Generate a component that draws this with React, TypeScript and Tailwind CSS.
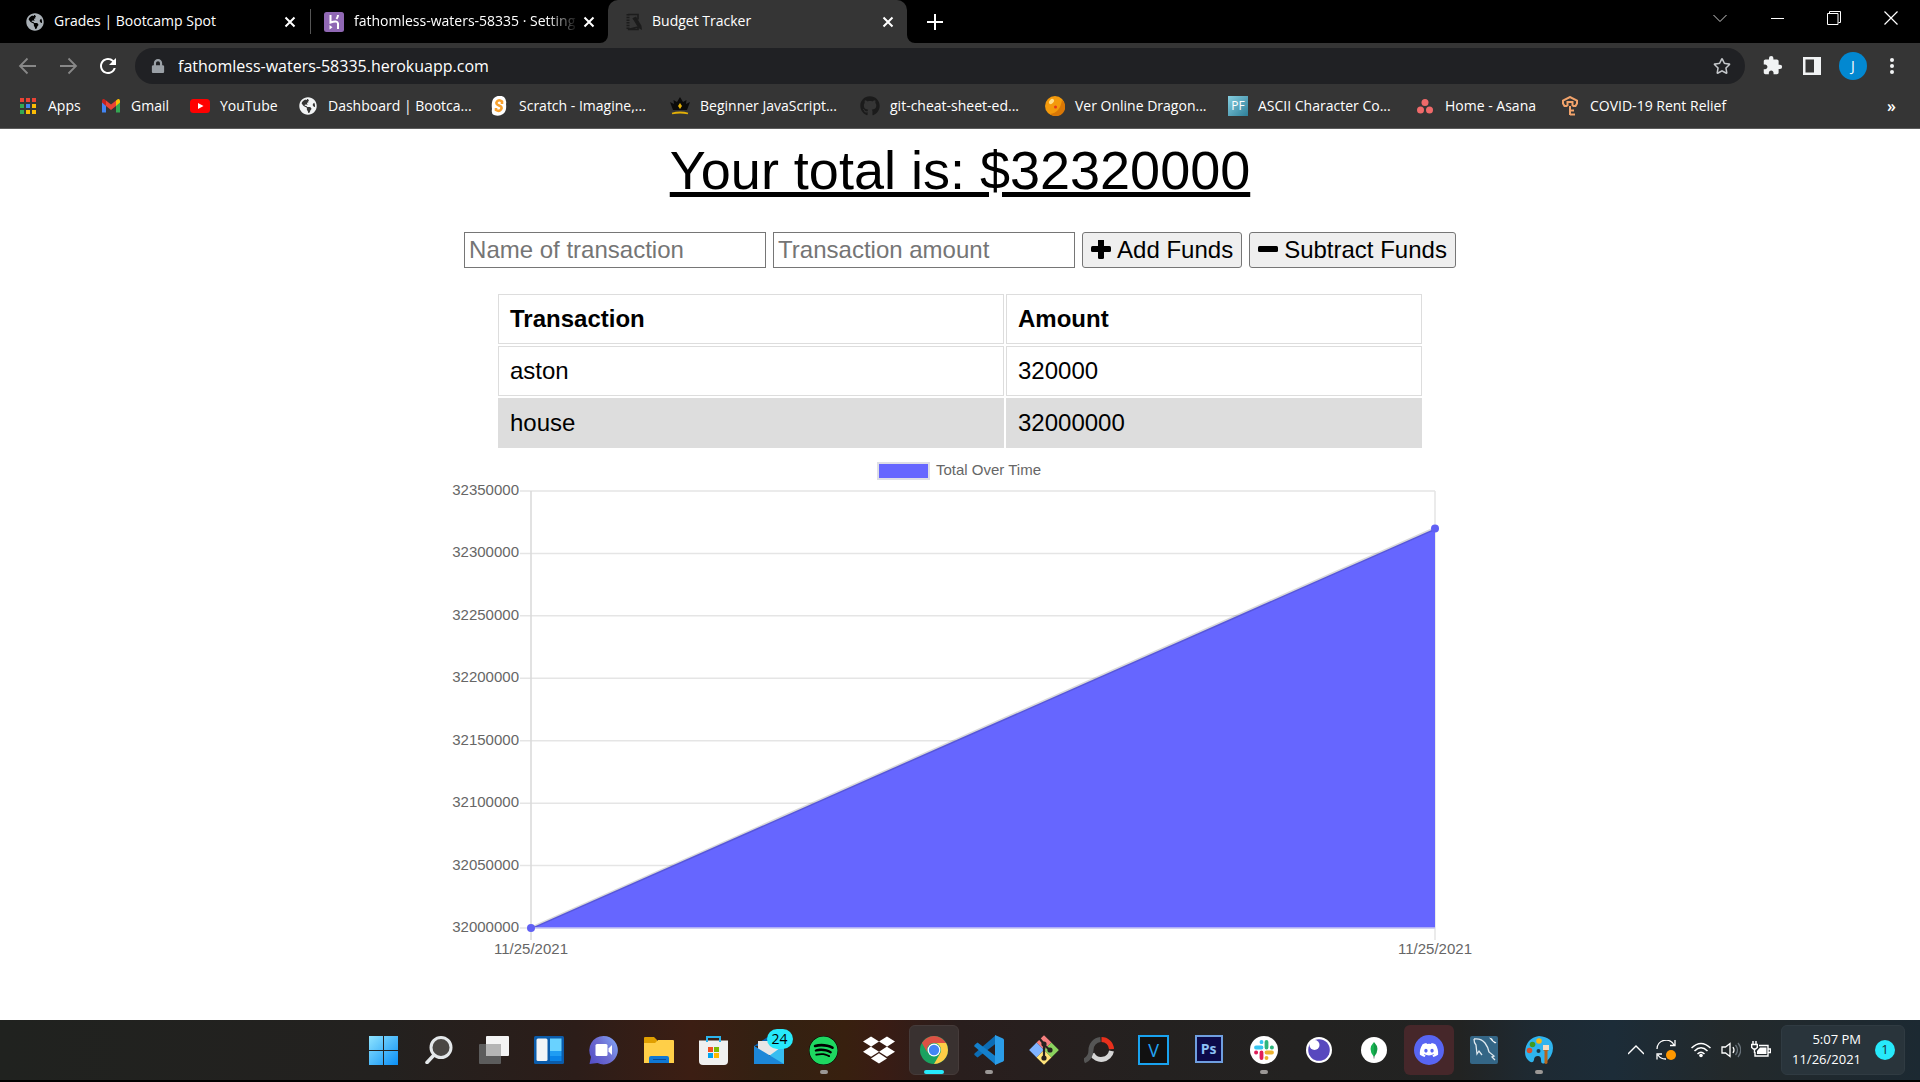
import React from "react";
import {
  FaDiscord,
  FaDropbox,
  FaGithub,
  FaGlobeAmericas,
  FaLock,
  FaRegStar,
  FaSpotify,
} from "react-icons/fa";
import { MdExtension, MdRefresh } from "react-icons/md";

const UI = "font-['Open_Sans','Noto_Sans',sans-serif]";
const tabLabel = "grow whitespace-nowrap pb-0.5";

function CloseGlyph() {
  return (
    <svg viewBox="0 0 12 12" className="size-3" stroke="#fff" strokeWidth="2" aria-hidden="true">
      <path d="M1.5 1.5l9 9M10.5 1.5l-9 9" />
    </svg>
  );
}

function TabStrip() {
  return (
    <div className="flex h-[43px] bg-black text-sm text-white">
      <div className="flex w-[310px] items-center pl-[26px] pr-[14px]">
        <FaGlobeAmericas className="size-[18px] shrink-0 text-[#a9b0b6]" />
        <span className={`${tabLabel} ml-[10px]`}>Grades | Bootcamp Spot</span>
        <button aria-label="Close Grades" className="shrink-0"><CloseGlyph /></button>
      </div>
      <div className="my-[9px] w-px bg-[#555]" />
      <div className="flex w-[297px] items-center pl-[13px] pr-[13px]">
        <svg viewBox="0 0 20 20" className="size-5 shrink-0">
          <rect width="20" height="20" rx="2.500" fill="#9068b4" />
          <path d="M6.500 3v7.500q7-2.500 7.500 1V17M14 3q0 2-1.500 4" fill="none" stroke="#fff" strokeWidth="2" />
          <path d="M5.500 13l3 2.200-3 2.200z" fill="#fff" />
        </svg>
        <span className={`${tabLabel} ml-[10px] min-w-0 [mask-image:linear-gradient(to_right,#000_84%,transparent_98%)]`}>
          fathomless-waters-58335 · Setting
        </span>
        <button aria-label="Close fathomless-waters" className="shrink-0"><CloseGlyph /></button>
      </div>
      <div className="relative flex w-[299px] items-center rounded-t-[10px] bg-[#353535] pl-[18px] pr-[13px]">
        <svg viewBox="0 0 8 8" className="absolute -left-2 bottom-0 size-2" fill="#353535"><path d="M8 0v8H0a8 8 0 0 0 8-8z" /></svg>
        <svg viewBox="0 0 8 8" className="absolute -right-2 bottom-0 size-2" fill="#353535"><path d="M0 0v8h8a8 8 0 0 1-8-8z" /></svg>
        <svg viewBox="0 0 18 18" className="size-[18px] shrink-0" fill="none" stroke="#1c1c1c" strokeWidth="1.6">
          <path d="M2 1.500h10v5M12 14v2.500H2z" />
          <path d="M2 1v16" strokeWidth="3" strokeDasharray="1.500 1.200" />
          <path d="M7.500 5.500l5.500 9 2 1-.3-2.500-5-8.500z" fill="#1c1c1c" />
        </svg>
        <span className={`${tabLabel} ml-2`}>Budget Tracker</span>
        <button aria-label="Close Budget Tracker"><CloseGlyph /></button>
      </div>
      <button aria-label="New tab" className="ml-5 self-center">
        <svg viewBox="0 0 16 16" className="size-4" stroke="#fff" strokeWidth="2"><path d="M8 0v16M0 8h16" /></svg>
      </button>
      <div className="ml-auto flex h-9 items-center gap-[43px] pr-[22px]">
        <button aria-label="Search tabs">
          <svg viewBox="0 0 14 14" className="size-[14px]" fill="none" stroke="#ccc"><path d="M.5 4l6.500 6.500L13.500 4" /></svg>
        </button>
        <button aria-label="Minimize">
          <svg viewBox="0 0 14 14" className="size-[14px]" stroke="#fff" shapeRendering="crispEdges"><path d="M.5 7.500h13" /></svg>
        </button>
        <button aria-label="Restore">
          <svg viewBox="0 0 14 14" className="size-[14px]" fill="none" stroke="#fff"><path d="M.5 2.500h10.500v11H.5zM2.500 2V.5h11v11H11.500" /></svg>
        </button>
        <button aria-label="Close window">
          <svg viewBox="0 0 14 14" className="size-[14px]" stroke="#fff" strokeWidth="1.200"><path d="M.5.5l13 13M13.500.5l-13 13" /></svg>
        </button>
      </div>
    </div>
  );
}

function AddressRow() {
  return (
    <div className="flex h-[45px] items-center bg-[#353535] pl-[18px] pr-[23px]">
      <button aria-label="Back">
        <svg viewBox="0 0 20 20" className="size-5" fill="none" stroke="#888" strokeWidth="1.800"><path d="M18 10H3M9.500 2.500L2 10l7.500 7.500" /></svg>
      </button>
      <button aria-label="Forward" className="ml-5">
        <svg viewBox="0 0 20 20" className="size-5" fill="none" stroke="#888" strokeWidth="1.800"><path d="M2 10h15M10.500 2.500L18 10l-7.500 7.500" /></svg>
      </button>
      <button aria-label="Reload" className="ml-[18px]">
        <MdRefresh className="size-6 text-white" />
      </button>
      <div className="ml-[15px] flex h-9 grow items-center rounded-full bg-[#202124] pl-4 pr-[14px]">
        <FaLock className="size-3.5 text-[#9aa0a6]" />
        <input
          aria-label="Address"
          defaultValue="fathomless-waters-58335.herokuapp.com"
          className="ml-[13px] min-w-0 grow bg-transparent text-base text-white outline-none"
        />
        <button aria-label="Bookmark this page"><FaRegStar className="size-[18px] text-[#c4c7ca]" /></button>
      </div>
      <button aria-label="Extensions" className="ml-[17px]"><MdExtension className="size-[21px] text-[#f1f3f4]" /></button>
      <button aria-label="Side panel" className="ml-5">
        <svg viewBox="0 0 18 18" className="size-[18px]"><path d="M0 0h18v18H0zM2.500 2.500v13h8.500v-13z" fill="#f1f3f4" fillRule="evenodd" /></svg>
      </button>
      <button aria-label="Profile" className="ml-[18px] flex size-7 items-center justify-center rounded-full bg-[#0288d1] text-sm text-white">J</button>
      <button aria-label="Menu" className="ml-5">
        <svg viewBox="0 0 10 18" className="h-[18px] w-[10px]" fill="#f1f3f4"><circle cx="5" cy="3" r="2" /><circle cx="5" cy="9" r="2" /><circle cx="5" cy="15" r="2" /></svg>
      </button>
    </div>
  );
}

const appColors = ["#ea4335", "#ea4335", "#ea4335", "#34a853", "#4285f4", "#fbbc05", "#34a853", "#fbbc05", "#fbbc05"];

const bookmarks: { name: string; cell: string; icon: React.ReactNode }[] = [
  {
    name: "Apps",
    cell: "w-[83px]",
    icon: (
      <svg viewBox="0 0 20 20" className="size-5">
        {appColors.map((c, i) => (
          <rect key={i} x={2 + (i % 3) * 6} y={2 + Math.floor(i / 3) * 6} width="4" height="4" fill={c} />
        ))}
      </svg>
    ),
  },
  {
    name: "Gmail",
    cell: "w-[89px]",
    icon: (
      <svg viewBox="0 0 20 20" className="size-5">
        <path d="M1 5v11.500h4V9z" fill="#4285f4" />
        <path d="M19 5v11.500h-4V9z" fill="#34a853" />
        <path d="M15 4.500L17 3q2-.5 2 2v1.500L15 10z" fill="#fbbc04" />
        <path d="M5 4.500L3 3Q1 2.500 1 5v1.500L5 10z" fill="#c5221f" />
        <path d="M5 4.500l5 4 5-4V10l-5 4-5-4z" fill="#ea4335" />
      </svg>
    ),
  },
  {
    name: "YouTube",
    cell: "w-[108px]",
    icon: (
      <svg viewBox="0 0 20 20" className="size-5"><rect y="3" width="20" height="14" rx="3.500" fill="#f00" /><path d="M8 7l5.500 3L8 13z" fill="#fff" /></svg>
    ),
  },
  { name: "Dashboard | Bootca...", cell: "w-[191px]", icon: <FaGlobeAmericas className="size-[18px] text-[#f1f3f4]" /> },
  {
    name: "Scratch - Imagine,...",
    cell: "w-[181px]",
    icon: (
      <svg viewBox="0 0 20 20" className="size-5">
        <path d="M5 2q5-4 10-1 3 3 2 7 1 7-3 10-4 3-9 1-3-1-2-6Q2 5 5 2z" fill="#fff" />
        <path d="M13 8V5.500Q10 3 8 5.500T10 9.500t2 4-5 .5v-2" fill="none" stroke="#f7a12f" strokeWidth="2.600" />
      </svg>
    ),
  },
  {
    name: "Beginner JavaScript...",
    cell: "w-[190px]",
    icon: (
      <svg viewBox="0 0 20 20" className="size-5">
        <path d="M3 14L0 6l4 2-.5-4L7 6l3-5 3 5 3.500-2L16 8l4-2-3 8z" fill="#0b0b0b" />
        <path d="M10 7l2 3-2 3-2-3z" fill="#e3b007" />
        <path d="M2 17.500q8-2 16 0" fill="none" stroke="#e3b007" strokeWidth="1.800" />
      </svg>
    ),
  },
  { name: "git-cheat-sheet-ed...", cell: "w-[185px]", icon: <FaGithub className="size-5 text-[#1b1b1b]" /> },
  {
    name: "Ver Online Dragon...",
    cell: "w-[183px]",
    icon: (
      <svg viewBox="0 0 20 20" className="size-5">
        <circle cx="10" cy="10" r="10" fill="#f49a0c" />
        <path d="M17 4a9 9 0 0 1-12 14q10-1 12-14z" fill="#d97706" />
        <ellipse cx="6.500" cy="5.500" rx="2" ry="3" transform="rotate(40 6.500 5.500)" fill="#ffe08a" />
        <circle cx="10.500" cy="11" r="1.500" fill="#e5391c" />
      </svg>
    ),
  },
  {
    name: "ASCII Character Co...",
    cell: "w-[187px]",
    icon: <span className="flex size-5 items-center justify-center bg-linear-to-br from-[#86cfe0] to-[#2c7f99] text-xs text-white">PF</span>,
  },
  {
    name: "Home - Asana",
    cell: "w-[145px]",
    icon: <svg viewBox="0 0 20 20" className="size-5" fill="#f06a6a"><circle cx="10" cy="6.500" r="3.500" /><circle cx="5.500" cy="14" r="3.500" /><circle cx="14.500" cy="14" r="3.500" /></svg>,
  },
  {
    name: "COVID-19 Rent Relief",
    cell: "w-[190px]",
    icon: (
      <svg viewBox="0 0 20 20" className="size-5" fill="none" stroke="#f2a36b" strokeWidth="2">
        <path d="M7.500 10H4.500L3 7.500V4.500L10 1l7 3.500v3L15.500 10h-3M7.500 10V6h5v4M10 10v9M10 14.500h4M10 18.500h5" />
      </svg>
    ),
  },
];

function BookmarksBar() {
  return (
    <nav className="flex h-[41px] items-center border-b border-[#5c5c5c] bg-[#353535] pb-1 pl-[18px] pr-6 text-sm text-white">
      {bookmarks.map((b) => (
        <a key={b.name} href="#" className={`${b.cell} flex shrink-0 items-center gap-[10px] whitespace-nowrap`}>
          <span className="flex size-5 shrink-0 items-center justify-center">{b.icon}</span>
          {b.name}
        </a>
      ))}
      <button aria-label="More bookmarks" className="ml-auto text-base font-semibold">»</button>
    </nav>
  );
}

const rows = [
  { name: "aston", amount: "320000" },
  { name: "house", amount: "32000000" },
];

function TransactionTable() {
  const cell = "border border-[#dddddd] px-[11px] py-[10px] text-left leading-7";
  return (
    <table className="mx-auto mt-6 w-[928px] table-fixed border-separate border-spacing-[2px]">
      <thead>
        <tr>
          <th className={`${cell} w-[506px]`}>Transaction</th>
          <th className={cell}>Amount</th>
        </tr>
      </thead>
      <tbody>
        {rows.map((r) => (
          <tr key={r.name} className="even:bg-[#dddddd]">
            <td className={cell}>{r.name}</td>
            <td className={cell}>{r.amount}</td>
          </tr>
        ))}
      </tbody>
    </table>
  );
}

const yTicks = [32350000, 32300000, 32250000, 32200000, 32150000, 32100000, 32050000, 32000000];

function TotalChart() {
  const left = 91;
  const right = 995;
  const top = 36;
  const bottom = 473;
  const step = (bottom - top) / 7;
  const peak = bottom - ((bottom - top) * 320000) / 350000;
  return (
    <svg viewBox="0 0 1040 520" className="mx-auto block w-[1040px] text-[15px]" fill="#666" role="img" aria-label="Total Over Time">
      <rect x="438" y="8" width="51" height="16" fill="#6666ff" stroke="#dedee6" strokeWidth="2" />
      <text x="496" y="20">Total Over Time</text>
      {yTicks.map((t, i) => (
        <g key={t}>
          <line x1={left - 11} x2={right} y1={top + i * step} y2={top + i * step} stroke="#e5e5e5" strokeWidth="1.500" />
          <text x={left - 12} y={top + i * step + 4} textAnchor="end">{t}</text>
        </g>
      ))}
      <line x1={left} x2={left} y1={top} y2={bottom + 12} stroke="#d9d9d9" strokeWidth="1.500" />
      <line x1={right} x2={right} y1={top} y2={bottom + 12} stroke="#e5e5e5" strokeWidth="1.500" />
      <path d={`M${left} ${bottom}L${right} ${peak}V${bottom}z`} fill="#6666ff" />
      <path d={`M${left} ${bottom}L${right} ${peak}`} stroke="#000" strokeOpacity="0.15" strokeWidth="3" />
      <path d={`M${left} ${bottom}H${right}`} stroke="#c8c8f4" strokeWidth="1.500" />
      <circle cx={left} cy={bottom} r="4" fill="#6060f4" />
      <circle cx={right} cy={peak} r="4" fill="#6060f4" />
      <text x={left} y={bottom + 26} textAnchor="middle">11/25/2021</text>
      <text x={right} y={bottom + 26} textAnchor="middle">11/25/2021</text>
    </svg>
  );
}

const field = "h-9 w-[302px] border border-[#767676] px-1 placeholder:text-[#757575]";
const action = "flex h-9 items-center gap-[6px] rounded-[3px] border border-[#767676] bg-[#efefef] px-2";

function BudgetPage() {
  return (
    <main className="flex grow flex-col bg-white font-['Liberation_Sans',Arial,sans-serif] text-2xl text-black">
      <h1 className="mt-[10px] text-center text-[54px] leading-[62px] underline decoration-[5px]">Your total is: $32320000</h1>
      <form className="mt-[31px] flex justify-center gap-[7px]" onSubmit={(e) => e.preventDefault()}>
        <input aria-label="Name of transaction" placeholder="Name of transaction" className={field} />
        <input aria-label="Transaction amount" placeholder="Transaction amount" className={field} />
        <button className={action}>
          <svg viewBox="0 0 20 20" className="size-5" aria-hidden="true">
            <rect y="6" width="20" height="6" rx="1.500" /><rect x="7" y="-1" width="6" height="20" rx="1.500" />
          </svg>
          Add Funds
        </button>
        <button className={action}>
          <svg viewBox="0 0 20 20" className="size-5" aria-hidden="true"><rect y="6" width="20" height="6" rx="1.500" /></svg>
          Subtract Funds
        </button>
      </form>
      <TransactionTable />
      <div className="mt-[5px]"><TotalChart /></div>
    </main>
  );
}

function ChromeLogo() {
  return (
    <svg viewBox="0 0 28 28" className="size-7">
      <circle cx="14" cy="14" r="14" fill="#1aa260" />
      <path d="M1.900 7A14 14 0 0 1 26.100 7H14a7 7 0 0 0-6.100 10.500z" fill="#dd5144" />
      <path d="M26.100 7A14 14 0 0 1 14 28l6.100-10.500A7 7 0 0 0 14 7z" fill="#ffcd46" />
      <circle cx="14" cy="14" r="6.500" fill="#fff" />
      <circle cx="14" cy="14" r="5.200" fill="#4285f4" />
    </svg>
  );
}

const apps: { name: string; icon: React.ReactNode; state?: "running" | "active" | "alert" }[] = [
  {
    name: "Start",
    icon: (
      <svg viewBox="0 0 29 29" className="size-[29px]">
        <defs><linearGradient id="win" x2="1" y2="1"><stop stopColor="#8fe4ff" /><stop offset="1" stopColor="#0a8ff5" /></linearGradient></defs>
        <path d="M0 0h14v14H0zM15 0h14v14H15zM0 15h14v14H0zM15 15h14v14H15z" fill="url(#win)" />
      </svg>
    ),
  },
  {
    name: "Search",
    icon: (
      <svg viewBox="0 0 28 28" className="size-7" stroke="#e4e8ea" fill="none">
        <circle cx="16" cy="11.500" r="10" strokeWidth="3" fill="#4a4744" />
        <path d="M9 19L2 26.500" strokeWidth="3.500" strokeLinecap="round" />
      </svg>
    ),
  },
  {
    name: "Task View",
    icon: (
      <svg viewBox="0 0 30 28" className="h-7 w-[30px]">
        <rect x="7" width="23" height="20" rx="1" fill="#f4f4f4" />
        <rect y="8" width="22" height="20" rx="1" fill="#5c5c5c" />
        <rect x="7" y="8" width="15" height="12" fill="#b5b5b5" />
      </svg>
    ),
  },
  {
    name: "Widgets",
    icon: (
      <svg viewBox="0 0 30 28" className="h-7 w-[30px]">
        <rect width="30" height="28" rx="1.500" fill="#0b5cab" />
        <rect x="2.500" y="2.500" width="11" height="22.500" rx="1.500" fill="#f2f5f7" />
        <path d="M16 2.500h11.500v12.500H16z" fill="#69d2ff" /><path d="M16 15h11.500v5H16z" fill="#1f9df3" /><path d="M16 20h11.500v5H16z" fill="#0a84e8" />
      </svg>
    ),
  },
  {
    name: "Chat",
    icon: (
      <svg viewBox="0 0 29 29" className="size-[29px]">
        <defs><linearGradient id="chat" x1="0" x2="1" y1="0.800" y2="0.200"><stop stopColor="#5550c8" /><stop offset="0.500" stopColor="#6d6bd0" /><stop offset="1" stopColor="#7fa2f5" /></linearGradient></defs>
        <path d="M14.500 0a14.200 14.200 0 1 1-6 27L.5 28l1.500-7A14.200 14.200 0 0 1 14.500 0z" fill="url(#chat)" />
        <rect x="6.500" y="8" width="12" height="12" rx="1.500" fill="#fff" /><path d="M19.500 12.500L23 9v10l-3.500-3.500z" fill="#fff" />
      </svg>
    ),
  },
  {
    name: "File Explorer",
    icon: (
      <svg viewBox="0 0 30 28" className="h-7 w-[30px]">
        <path d="M0 2q0-1 1-1h9l3 3v4H0z" fill="#e09f00" />
        <path d="M0 7h11l3-3h15q1 0 1 1v22H0z" fill="#ffcf48" />
        <path d="M5 27v-5q0-2 2-2h16q2 0 2 2v5z" fill="#0f78d4" /><path d="M9 23.500h13" stroke="#0a4a94" />
      </svg>
    ),
  },
  {
    name: "Microsoft Store",
    icon: (
      <svg viewBox="0 0 29 29" className="size-[29px]">
        <path d="M0 4.500h29V25q0 4-4 4H4q-4 0-4-4z" fill="#f0f0f0" />
        <path d="M8 6V1h13v5" fill="none" stroke="#2cb4ec" strokeWidth="2" />
        <path d="M9 11h5v5H9z" fill="#f25022" /><path d="M15 11h5v5h-5z" fill="#7fba00" /><path d="M9 17h5v5H9z" fill="#00a4ef" /><path d="M15 17h5v5h-5z" fill="#ffb900" />
      </svg>
    ),
  },
  {
    name: "Mail",
    icon: (
      <span className="relative block">
        <svg viewBox="0 0 30 28" className="h-7 w-[30px]">
          <path d="M0 10L15 0l15 10z" fill="#0a62b0" />
          <path d="M4 5h22v14H4z" fill="#e6e6e6" />
          <path d="M0 10l15 10L30 9v19H0z" fill="#37bdf0" /><path d="M0 10l30 18H0z" fill="#1c87d8" />
        </svg>
        <span className="absolute -top-[7px] left-[13px] flex h-5 w-[26px] items-center justify-center rounded-full bg-[#27e9fb] text-sm text-black">24</span>
      </span>
    ),
  },
  {
    name: "Spotify",
    state: "running",
    icon: <FaSpotify className="size-[29px] rounded-full bg-black text-[#1ed760]" />,
  },
  { name: "Dropbox", icon: <FaDropbox className="size-8 text-white" /> },
  { name: "Chrome", state: "active", icon: <ChromeLogo /> },
  {
    name: "Visual Studio Code",
    state: "running",
    icon: (
      <svg viewBox="0 0 30 30" className="size-[30px]">
        <path d="M22 8.500L3.500 22.500 .5 20Q0 19 .5 18.500L22 0z" fill="#0c6db5" />
        <path d="M22 21.500L3.500 7.500.5 10Q0 11 .5 11.500L22 30z" fill="#1480cc" />
        <path d="M21 0l8 3.500q1 .5 1 1.500v20q0 1-1 1.500L21 30z" fill="#2b9de8" />
      </svg>
    ),
  },
  {
    name: "Git",
    icon: (
      <svg viewBox="0 0 30 30" className="size-[30px]">
        <g transform="rotate(45 15 15)">
          <path d="M4.500 4.500H15V15H4.500z" fill="#f57f7f" /><path d="M15 4.500h10.500V15H15z" fill="#8bd35e" />
          <path d="M4.500 15H15v10.500H4.500z" fill="#80b3ff" /><path d="M15 15h10.500v10.500H15z" fill="#ffe37a" />
        </g>
        <path d="M10 3l5 6v15M15 10l6 5" fill="none" stroke="#26211f" strokeWidth="2.200" />
        <circle cx="15" cy="9" r="2.600" fill="#26211f" /><circle cx="21" cy="15" r="2.600" fill="#26211f" /><circle cx="15" cy="23" r="2.600" fill="#26211f" />
      </svg>
    ),
  },
  {
    name: "Recorder",
    icon: (
      <svg viewBox="0 0 30 28" className="h-7 w-[30px]" fill="none" strokeWidth="5">
        <path d="M17.500 3.500A10 10 0 0 1 27.500 13" stroke="#e8301c" />
        <path d="M27.500 15A10.500 10.500 0 0 1 8 18" stroke="#d6d6d6" />
        <path d="M16.500 3.500A10.500 10.500 0 0 0 7 14q0 8-7 11" stroke="#555" />
      </svg>
    ),
  },
  {
    name: "Vegas",
    icon: <span className="flex h-[30px] w-[31px] items-center justify-center border-2 border-[#19a3f0] bg-[#111] text-lg text-[#22a5f5]">V</span>,
  },
  {
    name: "Photoshop",
    icon: <span className="mb-0.5 flex size-7 items-center justify-center border-2 border-[#6f9fe0] bg-[#0c0a4a] text-sm font-bold text-[#8dc1f5]">Ps</span>,
  },
  {
    name: "Slack",
    state: "running",
    icon: (
      <svg viewBox="0 0 28 28" className="size-7" strokeWidth="3.800" strokeLinecap="round">
        <circle cx="14" cy="14" r="14" fill="#fff" />
        <path d="M6 11.500h5.500M11.500 6v.2" stroke="#36c5f0" /><path d="M16.500 6v5.500M22 11.500h-.2" stroke="#2eb67d" />
        <path d="M22 16.500h-5.500M16.500 22v-.2" stroke="#ecb22e" /><path d="M11.500 22v-5.500M6 16.500h.2" stroke="#e01e5a" />
      </svg>
    ),
  },
  {
    name: "Insomnia",
    icon: <svg viewBox="0 0 26 26" className="size-[26px]"><circle cx="13" cy="13" r="13" fill="#fff" /><circle cx="13" cy="13" r="10.800" fill="#5849be" /><circle cx="8.500" cy="8" r="5" fill="#fff" /></svg>,
  },
  {
    name: "MongoDB Compass",
    icon: <svg viewBox="0 0 26 26" className="size-[26px]"><circle cx="13" cy="13" r="13" fill="#fff" /><path d="M13 5q7 7 0 15z" fill="#139a45" /><path d="M13 5q-7 7 0 15z" fill="#17b352" /><path d="M13 19v2.500" stroke="#888" /></svg>,
  },
  {
    name: "Discord",
    state: "alert",
    icon: <span className="flex size-[30px] items-center justify-center rounded-full bg-[#5865f2]"><FaDiscord className="size-5 text-white" /></span>,
  },
  {
    name: "MySQL Workbench",
    icon: (
      <svg viewBox="0 0 28 28" className="size-7">
        <rect width="28" height="28" rx="2" fill="#346686" />
        <path d="M4 3q7-1 11 4 3 4 4 9l5 4-2 1 3 3M4 3q0 4 2 6l1 9 2-3 3 4" fill="none" stroke="#dfe9ef" strokeWidth="1.300" />
        <path d="M19 1.500l3 1 1.500 2.500 3 1.500-1.500 1-3-2.500z" fill="#fff" />
      </svg>
    ),
  },
  {
    name: "Paint",
    state: "running",
    icon: (
      <svg viewBox="0 0 28 28" className="size-7">
        <path d="M14 0q14 1 14 12 0 8-8 15-4 2-4-3 0-4-3-4-4 0-4 4-1 4-5 1-4-3-4-9Q1 2 14 0z" fill="#2fb4ee" />
        <circle cx="13.500" cy="15" r="2" fill="#1b3a4b" />
        <circle cx="4.500" cy="14.500" r="2.800" fill="#d9512c" /><circle cx="7.500" cy="8.500" r="2.800" fill="#3f9b1f" /><circle cx="14" cy="5" r="2.800" fill="#f5b813" />
        <path d="M18 9h6v5l-1.500 1V27q-1.500 2-3 0V15L18 14z" fill="#b8651b" /><path d="M18 9h6v5h-6z" fill="#f3dcc0" />
      </svg>
    ),
  },
];

function Taskbar() {
  return (
    <footer className="flex h-[62px] items-center border-b-2 border-black bg-[linear-gradient(to_right,#20221f_0%,#23211f_20%,#2c1d19_30%,#3c1e13_36%,#332112_40%,#38200f_44%,#391c14_46%,#291e1d_50%,#242120_60%,#222322_76%,#1e2a33_80%,#1c2c38_84%,#23292b_90%,#1c2932_100%)] pr-[15px] text-white">
      <nav className="ml-[356px] flex">
        {apps.map((a) => (
          <button key={a.name} aria-label={a.name} className="flex w-[55px] shrink-0 justify-center">
            <span
              className={`relative flex size-[50px] items-center justify-center rounded-md ${
                a.state === "active" ? "border border-[#453b3a] bg-[#393130]" : a.state === "alert" ? "bg-[#46272a]" : ""
              }`}
            >
              {a.icon}
              {a.state === "running" && <span className="absolute bottom-px h-1 w-2 rounded-full bg-[#9b9896]" />}
              {a.state === "active" && <span className="absolute bottom-0 h-1 w-5 rounded-full bg-[#27e9fb]" />}
            </span>
          </button>
        ))}
      </nav>
      <div className="ml-auto flex items-center">
        <button aria-label="Show hidden icons">
          <svg viewBox="0 0 16 16" className="size-4" fill="none" stroke="#fff" strokeWidth="1.400"><path d="M0 12l8-8 8 8" /></svg>
        </button>
        <svg viewBox="0 0 20 20" className="ml-3 size-5" fill="none" stroke="#fff" strokeWidth="1.300">
          <path d="M1 9a9 9 0 0 1 17-4M19 0v5.500h-5M10 19a9 9 0 0 1-8-4M1 19.500V14h5" /><circle cx="15" cy="15" r="5" fill="#ff9800" stroke="none" />
        </svg>
        <svg viewBox="0 0 20 16" className="ml-[15px] h-4 w-5" fill="none" stroke="#fff" strokeWidth="1.500">
          <path d="M.5 6q9.500-9 19 0M3.500 9q6.500-6.500 13 0M6.500 12q3.500-3.500 7 0" /><circle cx="10" cy="13.500" r="1.800" fill="#fff" stroke="none" />
        </svg>
        <svg viewBox="0 0 20 18" className="ml-[10px] h-[18px] w-5" fill="none" stroke="#fff" strokeWidth="1.300">
          <path d="M1 6h3.500L9 2.500v13L4.500 12H1zM12 6q2 3 0 6" /><path d="M14.500 4q4 5 0 10M17 2q5.500 7 0 14" stroke="#68727a" />
        </svg>
        <svg viewBox="0 0 20 18" className="ml-[10px] h-[18px] w-5" fill="none" stroke="#fff" strokeWidth="1.400">
          <path d="M8 4.500h9v10.500H4v-4M17.500 8h2v3.500h-2M2 0v3M5 0v3M.7 3.500h5.600v3L4.500 8h-2L.7 6.500zM3.500 8v4" /><path d="M9 6.500h6.500v6.500H6V10z" fill="#fff" stroke="none" />
        </svg>
        <button className="ml-[10px] flex h-[50px] w-[124px] items-center justify-end gap-[14px] rounded-md border border-[#303b42] bg-[#29343b] pr-[9px]">
          <span className="pb-0.5 text-right text-[13px] leading-5">5:07 PM<br />11/26/2021</span>
          <span className="flex size-5 items-center justify-center rounded-full bg-[#27e9fb] text-[13px] text-[#17303a]">1</span>
        </button>
      </div>
    </footer>
  );
}

export default function App() {
  return (
    <div className={`flex min-h-screen flex-col bg-white ${UI}`}>
      <header>
        <TabStrip />
        <AddressRow />
        <BookmarksBar />
      </header>
      <BudgetPage />
      <Taskbar />
    </div>
  );
}
